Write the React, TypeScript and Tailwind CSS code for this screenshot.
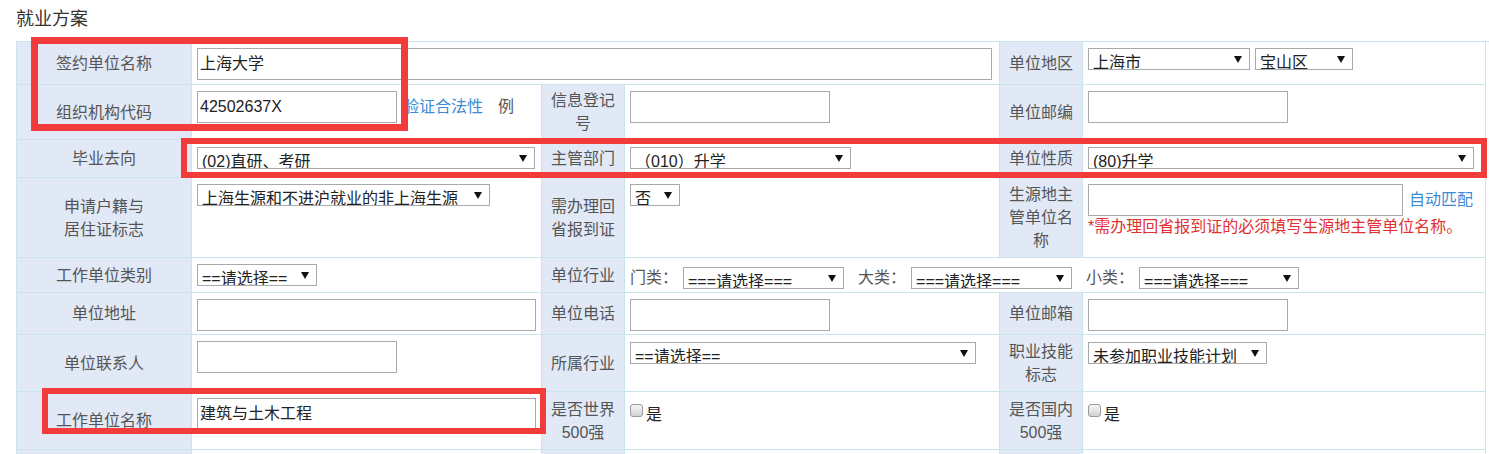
import React from "react";

type P = { children?: React.ReactNode; className?: string };

function Label({ children, className = "" }: P) {
  return (
    <div
      className={`flex items-center justify-center text-center bg-[#e1e9f7] text-[#555] text-[16px] leading-[23px] border-r border-b border-[#cbe3eb] px-[8px] ${className}`}
    >
      <div>{children}</div>
    </div>
  );
}

function Cell({ children, className = "" }: P) {
  return (
    <div className={`bg-white border-r border-b border-[#cbe3eb] pt-[6px] pl-[5px] ${className}`}>
      {children}
    </div>
  );
}

function Arrow() {
  return (
    <svg width="8" height="7" viewBox="0 0 8 7" className="absolute right-[7px] top-[7px]">
      <path d="M0 0H8L4 7Z" fill="#111" />
    </svg>
  );
}

function Select({ children, className = "" }: P) {
  return (
    <div className={`relative h-[22px] border border-[#a9a9a9] bg-white overflow-hidden shrink-0 ${className}`}>
      <span className="block pl-[4px] pt-[6px] text-[16px] leading-[16px] text-[#222] whitespace-nowrap">
        {children}
      </span>
      <Arrow />
    </div>
  );
}

function Input({ children, className = "" }: P) {
  return (
    <div
      className={`h-[32px] border border-[#a9a9a9] bg-white pl-[2px] flex items-center text-[16px] text-[#222] shrink-0 whitespace-nowrap ${className}`}
    >
      {children}
    </div>
  );
}

function Check() {
  return (
    <div className="flex items-start">
      <div className="w-[13px] h-[13px] rounded-[3px] border border-[#9a9a9a] bg-linear-to-b from-[#f6f6f6] to-[#d2d2d2]" />
      <span className="ml-[3px] mt-[3px] text-[16px] leading-[16px] text-[#222]">是</span>
    </div>
  );
}

export default function App() {
  return (
    <div className="relative w-[1489px] h-[454px] overflow-hidden bg-white font-['Liberation_Sans','Noto_Sans_CJK_SC',sans-serif]">
      <div className="h-[41px] pl-[16px] pt-[6px] text-[18px] leading-[26px] text-[#333]">就业方案</div>

      <div className="ml-[16px] grid grid-cols-[175px_350px_83px_375px_83px_403px] grid-rows-[43px_55px_38px_80px_35px_42px_57px_58px_40px] border-l border-t border-[#cbe3eb]">
        {/* Row 1 */}
        <Label>签约单位名称</Label>
        <Cell className="col-span-3">
          <Input className="w-[795px]">上海大学</Input>
        </Cell>
        <Label>单位地区</Label>
        <Cell className="flex gap-[5px]">
          <Select className="w-[162px]">上海市</Select>
          <Select className="w-[98px]">宝山区</Select>
        </Cell>

        {/* Row 2 */}
        <Label>组织机构代码</Label>
        <Cell className="pt-[5px]">
          <div className="flex items-center h-[32px]">
            <Input className="w-[200px]">42502637X</Input>
            <span className="ml-[6px] text-[16px] text-[#3d8bd4]">验证合法性</span>
            <span className="ml-[15px] text-[16px] text-[#555]">例</span>
          </div>
        </Cell>
        <Label>
          信息登记
          <br />号
        </Label>
        <Cell className="pt-[5px]">
          <Input className="w-[200px]" />
        </Cell>
        <Label>单位邮编</Label>
        <Cell className="pt-[5px]">
          <Input className="w-[200px]" />
        </Cell>

        {/* Row 3 */}
        <Label>毕业去向</Label>
        <Cell className="pt-[7px]">
          <Select className="w-[338px]">(02)直研、考研</Select>
        </Cell>
        <Label>主管部门</Label>
        <Cell className="pt-[7px]">
          <Select className="w-[221px]">（010）升学</Select>
        </Cell>
        <Label>单位性质</Label>
        <Cell className="pt-[7px]">
          <Select className="w-[386px]">(80)升学</Select>
        </Cell>

        {/* Row 4 */}
        <Label>
          申请户籍与
          <br />
          居住证标志
        </Label>
        <Cell>
          <Select className="w-[293px]">上海生源和不进沪就业的非上海生源</Select>
        </Cell>
        <Label>
          需办理回
          <br />
          省报到证
        </Label>
        <Cell>
          <Select className="w-[50px]">否</Select>
        </Cell>
        <Label>
          生源地主
          <br />
          管单位名
          <br />称
        </Label>
        <Cell className="pt-[5px]">
          <div className="flex items-center">
            <Input className="w-[315px]" />
            <span className="ml-[6px] text-[16px] text-[#3d8bd4]">自动匹配</span>
          </div>
          <div className="mt-[1px] text-[16px] leading-[20px] text-[#e23030] whitespace-nowrap">
            *需办理回省报到证的必须填写生源地主管单位名称。
          </div>
        </Cell>

        {/* Row 5 */}
        <Label>工作单位类别</Label>
        <Cell>
          <Select className="w-[120px]">==请选择==</Select>
        </Cell>
        <Label>单位行业</Label>
        <Cell className="col-span-3 flex items-center pt-0 h-full">
          <div className="flex items-center -mt-[1px]">
            <span className="text-[16px] text-[#555]">门类：</span>
            <Select className="ml-[5px] w-[161px]">===请选择===</Select>
            <span className="ml-[14px] text-[16px] text-[#555]">大类：</span>
            <Select className="ml-[5px] w-[161px]">===请选择===</Select>
            <span className="ml-[14px] text-[16px] text-[#555]">小类：</span>
            <Select className="ml-[5px] w-[160px]">===请选择===</Select>
          </div>
        </Cell>

        {/* Row 6 */}
        <Label>单位地址</Label>
        <Cell>
          <Input className="w-[339px]" />
        </Cell>
        <Label>单位电话</Label>
        <Cell>
          <Input className="w-[200px]" />
        </Cell>
        <Label>单位邮箱</Label>
        <Cell>
          <Input className="w-[200px]" />
        </Cell>

        {/* Row 7 */}
        <Label>单位联系人</Label>
        <Cell>
          <Input className="w-[200px]" />
        </Cell>
        <Label>所属行业</Label>
        <Cell className="pt-[7px]">
          <Select className="w-[346px]">==请选择==</Select>
        </Cell>
        <Label>
          职业技能
          <br />
          标志
        </Label>
        <Cell className="pt-[7px]">
          <Select className="w-[179px]">未参加职业技能计划</Select>
        </Cell>

        {/* Row 8 */}
        <Label>工作单位名称</Label>
        <Cell className="pt-[5px]">
          <Input className="w-[339px]">建筑与土木工程</Input>
        </Cell>
        <Label>
          是否世界
          <br />
          500强
        </Label>
        <Cell className="pt-[12px]">
          <Check />
        </Cell>
        <Label>
          是否国内
          <br />
          500强
        </Label>
        <Cell className="pt-[12px]">
          <Check />
        </Cell>

        {/* Row 9 */}
        <Label> </Label>
        <Cell />
        <Label> </Label>
        <Cell />
        <Label> </Label>
        <Cell />
      </div>

      {/* annotation boxes */}
      <div className="absolute left-[31px] top-[37px] w-[377px] h-[94px] border-[7px] border-[#f23b3b] pointer-events-none" />
      <div className="absolute left-[181px] top-[138px] w-[1306px] h-[40px] border-[6px] border-[#f23b3b] pointer-events-none" />
      <div className="absolute left-[42px] top-[388px] w-[504px] h-[46px] border-[6px] border-[#f23b3b] pointer-events-none" />
    </div>
  );
}
